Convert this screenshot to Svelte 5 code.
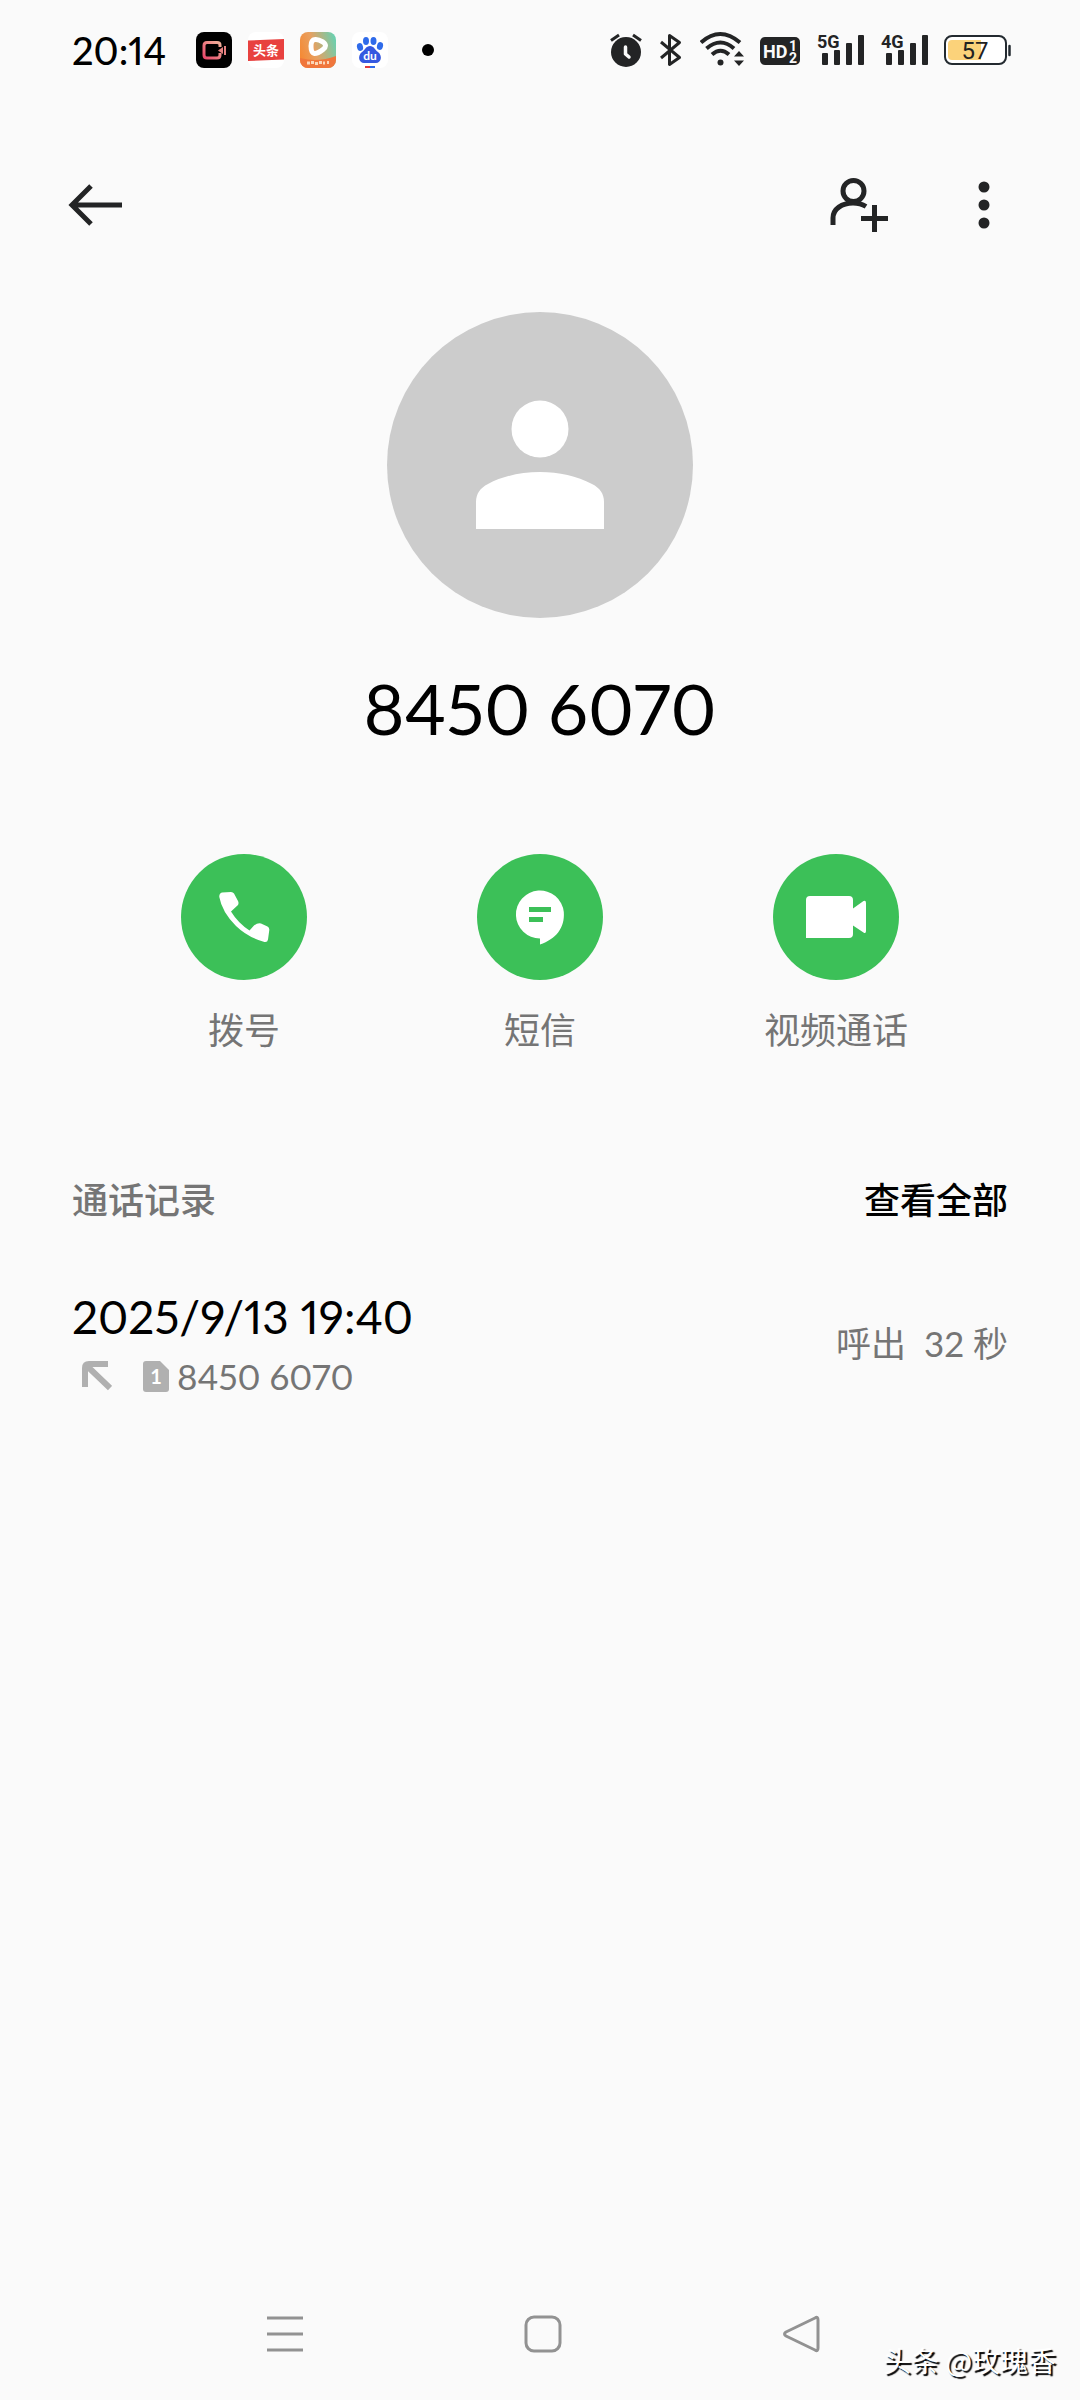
<script>
  const phone = "8450 6070";

  const actions = [
    { id: "dial", label: "拨号" },
    { id: "sms", label: "短信" },
    { id: "video", label: "视频通话" },
  ];

  const calls = [
    { time: "2025/9/13 19:40", sim: 1, number: phone, info: "呼出  32 秒" },
  ];

  const networks = ["5G", "4G"];
</script>

<div class="screen">
  <div class="status-bar">
    <span class="clock">20:14</span>

    <div class="notifications">
      <!-- Recorder -->
      <svg width="36" height="36" viewBox="0 0 36 36">
        <defs>
          <linearGradient id="recGrad" x1="0" y1="1" x2="1" y2="0">
            <stop offset="0%" stop-color="#e8476a" />
            <stop offset="100%" stop-color="#f0b09a" />
          </linearGradient>
        </defs>
        <rect width="36" height="36" rx="8" fill="#000" />
        <path d="M24 15V13Q24 10.500 21 10.500H11Q8 10.500 8 13.500V23Q8 26 11 26H21Q24 26 24 23V21" fill="none" stroke="url(#recGrad)" stroke-width="3" />
        <path d="M22 18.500l5-3.500v7z" fill="#e58080" />
        <path d="M29 14v9" stroke="#e58080" stroke-width="2" />
      </svg>

      <!-- Headlines -->
      <svg width="36" height="36" viewBox="0 0 36 36">
        <rect width="36" height="36" rx="8" fill="#fff" />
        <path d="M0 8.500L36 7V27.500L0 29z" fill="#e8413f" />
        <text x="18" y="23" text-anchor="middle" class="tiny-cjk">头条</text>
      </svg>

      <!-- Player -->
      <svg width="36" height="36" viewBox="0 0 36 36">
        <defs>
          <linearGradient id="playGrad" x1="0" y1="0.600" x2="1" y2="0.300">
            <stop offset="0%" stop-color="#f58a35" />
            <stop offset="40%" stop-color="#e8a060" />
            <stop offset="100%" stop-color="#6ccfae" />
          </linearGradient>
          <clipPath id="playClip"><rect width="36" height="36" rx="8" /></clipPath>
        </defs>
        <g clip-path="url(#playClip)">
          <rect width="36" height="36" fill="url(#playGrad)" />
          <path d="M0 26Q18 31 36 24V36H0z" fill="#f0763c" />
          <path d="M15 7.500Q11 8 11 14Q11 21 14.500 21.500Q18 21.500 23 17.500Q28 13.500 23 10Q18 7 15 7.500z" fill="none" stroke="#fff" stroke-width="5" />
          <path d="M7 31h3M11 30.500h3M15 31.500h3M19 30.500h3M23 31h2M27 30.500h2" stroke="#fbd6b8" stroke-width="3" />
        </g>
      </svg>

      <!-- Paw -->
      <svg width="36" height="36" viewBox="0 0 36 36">
        <rect width="36" height="36" rx="8" fill="#fff" />
        <g fill="#2f6bea">
          <ellipse cx="8" cy="15" rx="3" ry="4" transform="rotate(-15 8 15)" />
          <ellipse cx="14" cy="9" rx="3" ry="4" />
          <ellipse cx="21.500" cy="9" rx="3" ry="4" />
          <ellipse cx="28" cy="14" rx="3" ry="4" transform="rotate(15 28 14)" />
        </g>
        <path d="M18 14C22 14 23 18 26 20C31 24 29 31 24 31H12C7 31 5 24 10 20C13 18 14 14 18 14z" fill="#3558e0" />
        <text x="18" y="28" text-anchor="middle" class="du">du</text>
        <path d="M13 35h5" stroke="#e0393e" stroke-width="2" />
        <path d="M18 35h5" stroke="#2f6bea" stroke-width="2" />
      </svg>

      <span class="more-dot"></span>
    </div>

    <div class="system">
      <!-- Alarm -->
      <svg width="32" height="40" viewBox="0 0 32 40">
        <circle cx="16" cy="22" r="15" fill="#232425" />
        <path d="M1 10.500L9 5M31 10.500L23 5" stroke="#232425" stroke-width="3" />
        <path d="M15.500 17V24L19 27" fill="none" stroke="#fafafa" stroke-width="3.500" stroke-linecap="round" stroke-linejoin="round" />
      </svg>

      <!-- Bluetooth -->
      <svg width="26" height="40" viewBox="0 0 26 40" fill="none" stroke="#232425" stroke-width="3">
        <path d="M3 12L21.500 27.500L11.500 34.500V5.500L21.500 12.500L3 28" stroke-linejoin="round" />
      </svg>

      <!-- Wifi -->
      <svg width="44" height="40" viewBox="0 0 44 40" fill="none" stroke="#232425" stroke-width="4">
        <path d="M1 12.500Q20 -4.500 40 12.500" />
        <path d="M6.500 18.500Q20.500 6.500 34 18.500" />
        <path d="M12 24.500Q20.500 17 29 24.500" />
        <circle cx="20.500" cy="32.500" r="3" fill="#232425" stroke="none" />
        <path d="M34 26.500L39 21l5 5.500zM34 30.500L39 36l5-5.500z" fill="#232425" stroke="none" />
      </svg>

      <!-- HD voice -->
      <svg width="40" height="40" viewBox="0 0 40 40">
        <rect y="7" width="40" height="28" rx="5" fill="#232425" />
        <text x="3" y="28" class="hd">HD</text>
        <text x="29" y="21" class="hd-sub">1</text>
        <text x="29" y="33" class="hd-sub">2</text>
      </svg>

      {#each networks as net}
        <svg width="48" height="40" viewBox="0 0 48 40">
          <g fill="#232425">
            <rect x="6" y="23" width="6" height="12" rx="1" />
            <rect x="18" y="20" width="6" height="15" rx="1" />
            <rect x="30" y="13" width="6" height="22" rx="1" />
            <rect x="42" y="5" width="6" height="30" rx="1" />
          </g>
          <text x="1" y="18" class="net">{net}</text>
        </svg>
      {/each}

      <!-- Battery -->
      <svg width="68" height="40" viewBox="0 0 68 40">
        <rect x="1" y="6" width="61" height="28" rx="7" fill="#fff" stroke="#232a30" stroke-width="2" />
        <path d="M8 10H37V30H8Q4 30 4 26V14Q4 10 8 10z" fill="#fbd27a" />
        <path d="M65.500 16v9" stroke="#232a30" stroke-width="2.500" stroke-linecap="round" />
        <text x="31" y="29" text-anchor="middle" class="level">57</text>
      </svg>
    </div>
  </div>

  <header>
    <button class="icon-btn" aria-label="返回">
      <svg width="60" height="60" viewBox="0 0 60 60" fill="none" stroke="#232425" stroke-width="5">
        <path d="M6 30H56M25 11L6 30L25 49" />
      </svg>
    </button>
    <div class="header-actions">
      <button class="icon-btn" aria-label="添加联系人">
        <svg width="60" height="60" viewBox="0 0 60 60" fill="none" stroke="#232425" stroke-width="5">
          <circle cx="25.500" cy="16" r="10.500" />
          <path d="M5 50V43C5 34 14 28 25 28C30 28 34 29 38 31.500" />
          <path d="M33 43.500H60M46.500 30V57" />
        </svg>
      </button>
      <button class="icon-btn" aria-label="更多">
        <svg width="60" height="60" viewBox="0 0 60 60" fill="#232425">
          <circle cx="30" cy="12" r="5.500" />
          <circle cx="30" cy="30" r="5.500" />
          <circle cx="30" cy="48" r="5.500" />
        </svg>
      </button>
    </div>
  </header>

  <main>
    <section class="profile">
      <svg class="avatar" viewBox="0 0 306 306">
        <circle cx="153" cy="153" r="153" fill="#ccc" />
        <circle cx="153" cy="117" r="28.500" fill="#fff" />
        <path d="M89 217V190C89 182 93 176 101 172C116 164 134 160 153 160S190 164 205 172C213 176 217 182 217 190V217z" fill="#fff" />
      </svg>
      <h1>{phone}</h1>
    </section>

    <section class="actions">
      {#each actions as action (action.id)}
        <button class="action">
          <svg width="126" height="126" viewBox="0 0 126 126">
            <circle cx="63" cy="63" r="63" fill="#3cc058" />
            {#if action.id === "dial"}
              <path
                d="M41 38.500L50 38Q52 38 53 39.500L57 47Q58 49 57 51L50 57.500Q57 69 68.500 76.500L73 71.500Q77 68.500 80 69.500L86.500 72.500Q88.500 73.500 88.300 76L87 85.500Q86.500 88.500 83.500 88Q67 83.500 55 72Q41 58 38.300 43Q38 39.500 41 38.500z"
                fill="#fff"
              />
            {:else if action.id === "sms"}
              <path d="M63 84.500A24 24 0 1 1 86.800 58C88 74 79 85 63 90.500z" fill="#fff" />
              <rect x="52" y="53" width="22" height="5" fill="#3cc058" />
              <rect x="52" y="63" width="14" height="5" fill="#3cc058" />
            {:else}
              <path
                d="M37 42H76Q80 42 80 46V54.500L90.500 47Q93 46 93 49V77Q93 80 90.500 78.500L80 71.500V80Q80 84 76 84H33V46Q33 42 37 42z"
                fill="#fff"
              />
            {/if}
          </svg>
          <span>{action.label}</span>
        </button>
      {/each}
    </section>

    <section class="history">
      <div class="history-head">
        <h2>通话记录</h2>
        <button class="see-all">查看全部</button>
      </div>

      <ul>
        {#each calls as call}
          <li>
            <div>
              <p class="time">{call.time}</p>
              <p class="detail">
                <svg class="direction" width="30" height="32" viewBox="0 0 30 32" fill="none" stroke="#b0b0b0" stroke-width="6">
                  <path d="M3 27V8Q3 4 7 4H26M5 6L28 28" />
                </svg>
                <svg width="26" height="32" viewBox="0 0 26 32">
                  <path d="M3 1H17L26 10V29Q26 32 23 32H3Q0 32 0 29V4Q0 1 3 1z" fill="#b0b0b0" />
                  <text x="13" y="24" text-anchor="middle" class="sim">{call.sim}</text>
                </svg>
                <span>{call.number}</span>
              </p>
            </div>
            <span class="info">{call.info}</span>
          </li>
        {/each}
      </ul>
    </section>
  </main>

  <nav>
    <button class="nav-btn" aria-label="最近任务">
      <svg width="40" height="40" viewBox="0 0 40 40" fill="none" stroke="#929292" stroke-width="3">
        <path d="M2 4H38M2 20H38M2 36H38" />
      </svg>
    </button>
    <button class="nav-btn" aria-label="主屏幕">
      <svg width="40" height="40" viewBox="0 0 40 40" fill="none" stroke="#929292" stroke-width="3">
        <rect x="3" y="3" width="34" height="34" rx="8" />
      </svg>
    </button>
    <button class="nav-btn" aria-label="后退">
      <svg width="40" height="40" viewBox="0 0 40 40" fill="none" stroke="#929292" stroke-width="3">
        <path d="M34 4Q37 2 37 6V34Q37 38 34 36L5 22Q2 20 5 18z" stroke-linejoin="round" />
      </svg>
    </button>
  </nav>

  <span class="watermark">头条 @玫瑰香</span>
</div>

<style>
  :global(body) {
    background: #fafafa;
  }

  .screen {
    position: relative;
    display: flex;
    flex-direction: column;
    min-height: 100vh;
    background: #fafafa;
    color: #000;
    font-family: Lato, "Noto Sans CJK SC", sans-serif;
    font-variant-numeric: proportional-nums;
  }

  svg {
    display: block;
    flex: none;
  }

  button {
    padding: 0;
    border: 0;
    background: none;
    color: inherit;
    font: inherit;
    cursor: pointer;
  }

  h1,
  h2,
  p,
  ul {
    margin: 0;
    padding: 0;
    font-weight: 400;
  }

  /* Status bar */
  .status-bar {
    display: flex;
    align-items: center;
    height: 100px;
    padding: 0 68px 0 72px;
  }

  .clock {
    min-width: 124px;
    font-size: 38px;
    font-weight: 500;
    line-height: 48px;
  }

  .notifications,
  .system {
    display: flex;
    align-items: center;
    gap: 16px;
  }

  .system {
    margin-left: auto;
  }

  .more-dot {
    width: 12px;
    height: 12px;
    margin-left: 18px;
    border-radius: 50%;
    background: #000;
  }

  .tiny-cjk {
    fill: #fff;
    font: 700 13px "Noto Sans CJK SC", sans-serif;
  }

  .du {
    fill: #fff;
    font: 700 12px Lato, sans-serif;
  }

  .hd {
    fill: #fafafa;
    font: 700 18px Roboto, sans-serif;
  }

  .hd-sub {
    fill: #fafafa;
    font: 700 14px Roboto, sans-serif;
  }

  .net {
    fill: #232425;
    stroke: #fafafa;
    stroke-width: 3px;
    paint-order: stroke;
    font: 700 18px Roboto, sans-serif;
  }

  .level {
    fill: #222;
    font: 400 24px Roboto, sans-serif;
  }

  /* Header */
  header {
    display: flex;
    align-items: center;
    justify-content: space-between;
    height: 210px;
    padding: 0 66px;
  }

  .header-actions {
    display: flex;
    gap: 66px;
  }

  /* Profile */
  .profile {
    display: flex;
    flex-direction: column;
    align-items: center;
    gap: 40px;
    padding-top: 2px;
  }

  .avatar {
    width: 306px;
    height: 306px;
  }

  h1 {
    font-size: 70px;
    line-height: 100px;
  }

  .actions {
    display: grid;
    grid-template-columns: repeat(3, 1fr);
    padding: 96px 96px 0;
  }

  .action {
    display: flex;
    flex-direction: column;
    align-items: center;
    gap: 26px;
    color: #757575;
    font-size: 36px;
    line-height: 48px;
  }

  /* Call history */
  .history {
    padding: 122px 72px 0;
  }

  .history-head {
    display: flex;
    align-items: center;
    justify-content: space-between;
    font-size: 36px;
    line-height: 48px;
  }

  h2 {
    color: #757575;
    font-size: 36px;
    font-weight: 500;
  }

  .see-all {
    font-weight: 500;
  }

  ul {
    list-style: none;
    padding-top: 60px;
  }

  li {
    display: flex;
    align-items: center;
    justify-content: space-between;
  }

  .time {
    font-size: 46px;
    line-height: 66px;
  }

  .detail {
    display: flex;
    align-items: center;
    padding-left: 10px;
    color: #757575;
    font-size: 35px;
    line-height: 52px;
  }

  .direction {
    margin-right: 31px;
  }

  .detail span {
    margin-left: 8px;
  }

  .sim {
    fill: #fff;
    font: 700 20px Lato, sans-serif;
  }

  .info {
    color: #757575;
    font-size: 35px;
    line-height: 48px;
    white-space: pre;
  }

  /* System navigation */
  nav {
    display: grid;
    grid-template-columns: repeat(3, 1fr);
    margin-top: auto;
    padding: 0 150px 0 156px;
    height: 132px;
  }

  .nav-btn {
    display: flex;
    align-items: center;
    justify-content: center;
  }

  .watermark {
    position: absolute;
    right: 24px;
    bottom: 22px;
    color: #fff;
    font: 400 28px/36px "Noto Sans CJK SC", sans-serif;
    text-shadow: 2px 2px 1px #000;
  }
</style>
